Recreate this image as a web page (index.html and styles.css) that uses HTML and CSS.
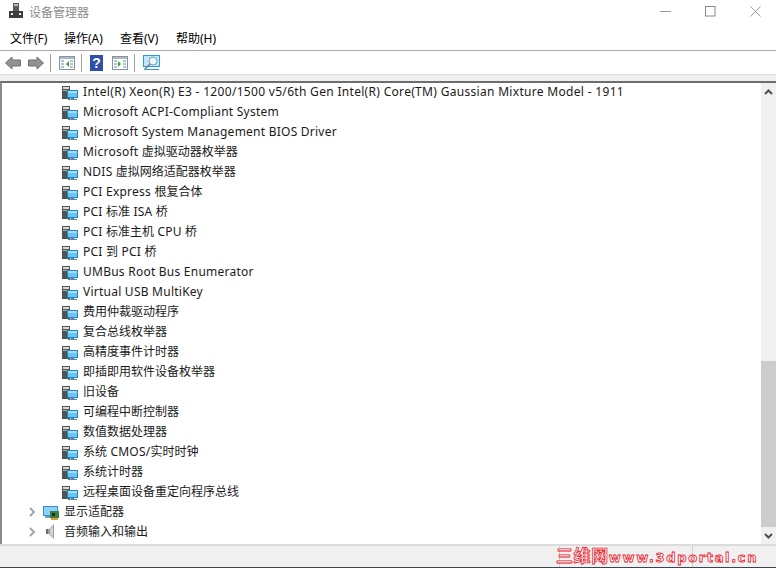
FILE: index.html
```html
<!DOCTYPE html>
<html lang="zh-CN">
<head>
<meta charset="utf-8">
<title>设备管理器</title>
<link rel="stylesheet" href="styles.css">
</head>
<body>
<svg class="defs" width="0" height="0">
  <defs>
    <g id="dev">
      <rect x="0" y="0" width="8" height="13" fill="#4f544f"/>
      <rect x="1" y="1" width="6" height="2" fill="#d8dcd8"/>
      <rect x="1" y="4" width="6" height="1" fill="#b0b4b0"/>
      <rect x="5" y="4" width="11" height="8" fill="#1f87c8"/>
      <rect x="6" y="5" width="9" height="6" fill="#6cc4f4"/>
      <rect x="6" y="5" width="9" height="2" fill="#a2defa"/>
      <rect x="9" y="12" width="3" height="1" fill="#777"/>
      <rect x="6" y="13" width="9" height="1" fill="#4a8ab0"/>
    </g>
    <path id="chev" d="M1 1l4 4-4 4" fill="none" stroke="#a6a6a6" stroke-width="2"/>
  </defs>
</svg>
<div class="win">
  <header class="title">
    <svg class="appicon" width="16" height="16" viewBox="0 0 16 16">
      <rect x="5" y="0" width="6" height="8" fill="#5a5a5a"/>
      <rect x="6" y="1" width="4" height="2" fill="#bbb"/>
      <rect x="1" y="8" width="14" height="7" fill="#3d3d3d"/>
      <rect x="3" y="10" width="2" height="2" fill="#eee"/>
      <rect x="11" y="10" width="2" height="2" fill="#eee"/>
    </svg>
    <span class="title-text">设备管理器</span>
    <div class="caption">
      <svg width="11" height="11" viewBox="0 0 11 11"><path d="M0 5.500h11" stroke="#999" fill="none"/></svg>
      <svg width="11" height="11" viewBox="0 0 11 11"><rect x=".5" y=".5" width="9.500" height="9.500" stroke="#888" fill="none"/></svg>
      <svg width="11" height="11" viewBox="0 0 11 11"><path d="M.5.5l10 10M10.500.5l-10 10" stroke="#999" fill="none"/></svg>
    </div>
  </header>
  <nav class="menu">
    <span>文件(F)</span><span>操作(A)</span><span>查看(V)</span><span>帮助(H)</span>
  </nav>
  <div class="toolbar">
    <svg class="tb" width="16" height="14" viewBox="0 0 16 14"><path d="M.5 7L7 1v3h8.500v6H7v3z" fill="#8f9490" stroke="#6c706c"/></svg>
    <svg class="tb" width="16" height="14" viewBox="0 0 16 14"><path d="M15.500 7L9 1v3H.5v6H9v3z" fill="#8f9490" stroke="#6c706c"/></svg>
    <i class="sep"></i>
    <svg class="tb" width="16" height="14" viewBox="0 0 16 14"><rect x=".5" y=".5" width="15" height="13" fill="#fff" stroke="#8a949c"/><rect x="1" y="1" width="14" height="2" fill="#aeb8c0"/><path d="M2 5h3M2 8h3M2 11h3M11 5h3M11 8h3M11 11h3" stroke="#5a88b0"/><path d="M10 5v6L7 8z" fill="#37a53a"/></svg>
    <i class="sep"></i>
    <span class="help">?</span>
    <svg class="tb" width="16" height="14" viewBox="0 0 16 14"><rect x=".5" y=".5" width="15" height="13" fill="#fff" stroke="#8a949c"/><rect x="1" y="1" width="14" height="2" fill="#aeb8c0"/><path d="M2 5h3M2 8h3M2 11h3M11 5h3M11 8h3M11 11h3" stroke="#5a88b0"/><path d="M6 5v6l3-3z" fill="#37a53a"/></svg>
    <i class="sep"></i>
    <svg class="tb" width="17" height="16" viewBox="0 0 17 16"><rect x=".5" y=".5" width="16" height="11" fill="#bfe6fa" stroke="#2f9ad8"/><circle cx="10" cy="6" r="4" fill="#e8f6fc" stroke="#7aa0b0"/><path d="M7 9l-5 5" stroke="#777" stroke-width="1.500"/><path d="M1 14.500h15" stroke="#2f9ad8"/></svg>
  </div>
  <div class="band"></div>
  <main class="pane">
    <ul class="tree">
      <li class="row child"><svg class="ic" viewBox="0 -2 16 16"><use href="#dev"/></svg><span class="wide">Intel(R) Xeon(R) E3 - 1200/1500 v5/6th Gen Intel(R) Core(TM) Gaussian Mixture Model - 1911</span></li>
      <li class="row child"><svg class="ic" viewBox="0 -2 16 16"><use href="#dev"/></svg><span>Microsoft ACPI-Compliant System</span></li>
      <li class="row child"><svg class="ic" viewBox="0 -2 16 16"><use href="#dev"/></svg><span>Microsoft System Management BIOS Driver</span></li>
      <li class="row child"><svg class="ic" viewBox="0 -2 16 16"><use href="#dev"/></svg><span>Microsoft <span class="han">虚拟驱动器枚举器</span></span></li>
      <li class="row child"><svg class="ic" viewBox="0 -2 16 16"><use href="#dev"/></svg><span>NDIS <span class="han">虚拟网络适配器枚举器</span></span></li>
      <li class="row child"><svg class="ic" viewBox="0 -2 16 16"><use href="#dev"/></svg><span>PCI Express <span class="han">根复合体</span></span></li>
      <li class="row child"><svg class="ic" viewBox="0 -2 16 16"><use href="#dev"/></svg><span>PCI <span class="han">标准</span> ISA <span class="han">桥</span></span></li>
      <li class="row child"><svg class="ic" viewBox="0 -2 16 16"><use href="#dev"/></svg><span>PCI <span class="han">标准主机</span> CPU <span class="han">桥</span></span></li>
      <li class="row child"><svg class="ic" viewBox="0 -2 16 16"><use href="#dev"/></svg><span>PCI <span class="han">到</span> PCI <span class="han">桥</span></span></li>
      <li class="row child"><svg class="ic" viewBox="0 -2 16 16"><use href="#dev"/></svg><span>UMBus Root Bus Enumerator</span></li>
      <li class="row child"><svg class="ic" viewBox="0 -2 16 16"><use href="#dev"/></svg><span>Virtual USB MultiKey</span></li>
      <li class="row child"><svg class="ic" viewBox="0 -2 16 16"><use href="#dev"/></svg><span class="han">费用仲裁驱动程序</span></li>
      <li class="row child"><svg class="ic" viewBox="0 -2 16 16"><use href="#dev"/></svg><span class="han">复合总线枚举器</span></li>
      <li class="row child"><svg class="ic" viewBox="0 -2 16 16"><use href="#dev"/></svg><span class="han">高精度事件计时器</span></li>
      <li class="row child"><svg class="ic" viewBox="0 -2 16 16"><use href="#dev"/></svg><span class="han">即插即用软件设备枚举器</span></li>
      <li class="row child"><svg class="ic" viewBox="0 -2 16 16"><use href="#dev"/></svg><span class="han">旧设备</span></li>
      <li class="row child"><svg class="ic" viewBox="0 -2 16 16"><use href="#dev"/></svg><span class="han">可编程中断控制器</span></li>
      <li class="row child"><svg class="ic" viewBox="0 -2 16 16"><use href="#dev"/></svg><span class="han">数值数据处理器</span></li>
      <li class="row child"><svg class="ic" viewBox="0 -2 16 16"><use href="#dev"/></svg><span><span class="han">系统</span> CMOS/<span class="han">实时时钟</span></span></li>
      <li class="row child"><svg class="ic" viewBox="0 -2 16 16"><use href="#dev"/></svg><span class="han">系统计时器</span></li>
      <li class="row child"><svg class="ic" viewBox="0 -2 16 16"><use href="#dev"/></svg><span class="han">远程桌面设备重定向程序总线</span></li>
      <li class="row parent">
        <svg class="chev" width="7" height="10" viewBox="0 0 7 10"><use href="#chev"/></svg>
        <svg class="ic" viewBox="0 -1 16 16"><rect x="0" y="1" width="15" height="10" fill="#2f8fcf"/><rect x="1" y="2" width="13" height="8" fill="#8ed2f6"/><rect x="2" y="11" width="7" height="2" fill="#6f9fbf"/><rect x="7" y="6" width="9" height="7" fill="#3d7d46"/><rect x="9" y="8" width="3" height="3" fill="#16331c"/><rect x="8" y="13" width="7" height="2" fill="#e0a030"/></svg>
        <span class="han">显示适配器</span>
      </li>
      <li class="row parent">
        <svg class="chev" width="7" height="10" viewBox="0 0 7 10"><use href="#chev"/></svg>
        <svg class="ic" viewBox="0 -1 16 16"><path d="M3 4h3l5-5v15l-5-5H3z" fill="#9aa0a0"/><path d="M7 4l3-3v11l-3-3z" fill="#d0d4d4"/><path d="M3 4h2v5H3z" fill="#6a6f6f"/></svg>
        <span class="han">音频输入和输出</span>
      </li>
    </ul>
    <div class="scrollbar">
      <div class="sbtn"><svg width="9" height="6" viewBox="0 0 9 6"><path d="M1 5l3.500-3.500L8 5" fill="none" stroke="#505050" stroke-width="2"/></svg></div>
      <div class="track"><div class="thumb"></div></div>
      <div class="sbtn"><svg width="9" height="6" viewBox="0 0 9 6"><path d="M1 1l3.500 3.500L8 1" fill="none" stroke="#505050" stroke-width="2"/></svg></div>
    </div>
  </main>
  <footer class="status">
    <i class="cell a"></i><i class="cell b"></i><i class="cell c"></i>
    <span class="mark"><span class="mark-han">三维网</span>www.3dportal.cn</span>
  </footer>
</div>
</body>
</html>
```
FILE: styles.css
```css
* { box-sizing: border-box; }
html, body { margin: 0; padding: 0; }
body {
  width: 776px;
  height: 568px;
  overflow: hidden;
  background: #fff;
  font-family: "Noto Sans", "Noto Sans CJK SC", sans-serif;
  font-size: 12px;
  color: #000;
}
.defs { position: absolute; }
.win { display: flex; flex-direction: column; height: 568px; }

.title { display: flex; align-items: center; height: 29px; flex: none; padding-left: 8px; padding-bottom: 7px; }
.appicon { margin-right: 5px; }
.title-text { color: #8c8c8c; font-family: "Noto Sans CJK SC", sans-serif; }
.caption { display: flex; gap: 34px; margin-left: auto; padding-right: 15px; }
.caption svg { display: block; }

.menu { display: flex; gap: 16px; height: 21px; flex: none; padding: 0 0 4px 10px; align-items: center; }
.menu span { width: 40px; white-space: nowrap; }
.menu span:first-child { margin-right: -2px; }

.toolbar { display: flex; align-items: center; height: 24px; flex: none; border-top: 1px solid #a8a8a8; padding-left: 5px; }
.tb { display: block; margin-right: 7px; flex: none; }
.sep { width: 1px; height: 18px; background: #a0a0a0; margin: 0 8px 0 -1px; flex: none; }
.help { width: 13px; height: 16px; margin-right: 9px; background: #2f4fa8; color: #fff; font: bold 14px/16px "Liberation Sans", sans-serif; text-align: center; flex: none; }

.band { height: 7px; flex: none; background: #f0f0f0; border-top: 1px solid #dcdcdc; }

.pane { display: flex; flex: 1; min-height: 0; border-top: 2px solid #6e6e6e; border-left: 2px solid #8a8a8a; overflow: hidden; }
.tree { list-style: none; margin: -2px 0 0; padding: 0; flex: 1; min-width: 0; overflow: hidden; }
.row { display: flex; align-items: center; height: 20px; white-space: nowrap; letter-spacing: .24px; color: #1a1a1a; }
.row.child { padding-left: 60px; }
.row.parent { padding-left: 27px; }
.ic { width: 16px; height: 16px; flex: none; margin: 2px 5px 0 0; }
.chev { margin: 2px 7px 0 0; flex: none; }
.wide { letter-spacing: .31px; }
.han { letter-spacing: 0; }

.scrollbar { display: flex; flex-direction: column; width: 15px; flex: none; background: #f0f0f0; }
.sbtn { height: 17px; flex: none; display: flex; align-items: center; justify-content: center; }
.track { flex: 1; padding-top: 261px; }
.thumb { height: 166px; background: #cdcdcd; }

.status { position: relative; display: flex; height: 24px; flex: none; background: #f0f0f0; border-top: 2px solid #dcdcdc; border-bottom: 1px solid #3a4650; }
.cell { display: block; border-right: 1px solid #d0d0d0; }
.cell.a { width: 560px; }
.cell.b { width: 133px; }
.cell.c { flex: 1; border-right: 0; }
.mark {
  position: absolute;
  left: 556px;
  top: 0;
  line-height: 20px;
  font-family: "DejaVu Sans", "Noto Sans CJK SC", sans-serif;
  font-weight: bold;
  font-size: 13px;
  letter-spacing: 1.650px;
  color: #fff;
  -webkit-text-stroke: .8px #e8202c;
  white-space: nowrap;
}
.mark-han { font-size: 17px; letter-spacing: .6px; }
```
